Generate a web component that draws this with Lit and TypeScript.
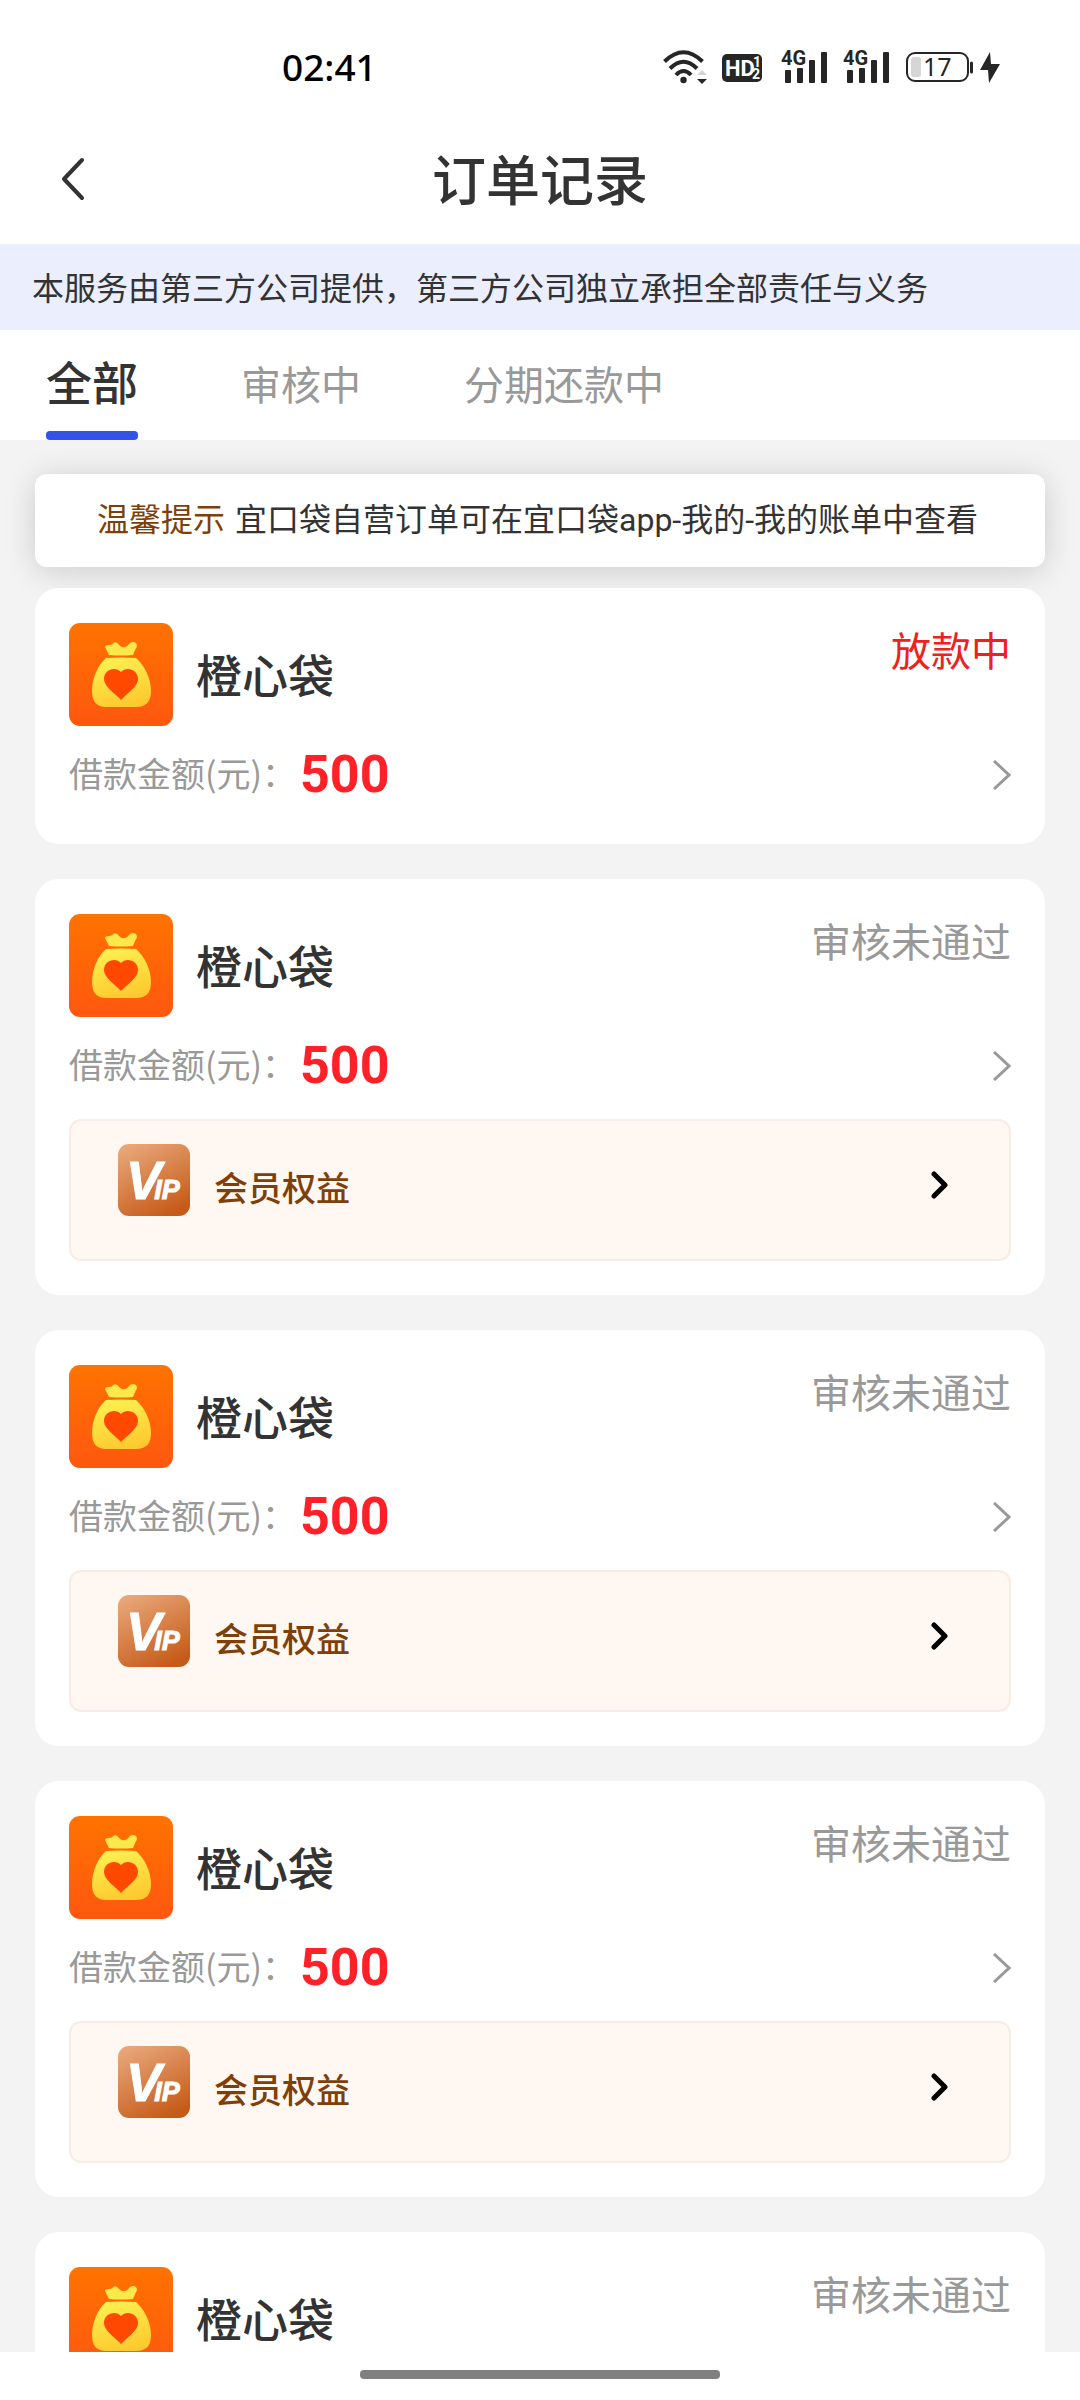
import { LitElement, html, css, nothing } from "lit";
import { customElement, property, state } from "lit/decorators.js";
import { classMap } from "lit/directives/class-map.js";

interface Order {
  name: string;
  amount: number;
  status: string;
  active: boolean;
  member: boolean;
}

const rejected: Order = { name: "橙心袋", amount: 500, status: "审核未通过", active: false, member: true };

const ORDERS: Order[] = [
  { name: "橙心袋", amount: 500, status: "放款中", active: true, member: false },
  rejected,
  rejected,
  rejected,
  rejected,
];

const TABS = ["全部", "审核中", "分期还款中"];

@customElement("status-bar")
class StatusBar extends LitElement {
  static styles = css`
    :host {
      display: flex;
      align-items: center;
      justify-content: space-between;
      height: 136px;
      padding: 0 80px 0 282px;
      box-sizing: border-box;
      flex: none;
    }
    .time {
      padding-bottom: 2px;
      font: 500 37px/48px "Noto Sans", "Open Sans", sans-serif;
      color: #000;
    }
    .icons {
      display: flex;
      align-items: center;
      gap: 16px;
    }
    svg {
      display: block;
      overflow: visible;
    }
    .hd {
      font: 700 22px "Liberation Sans Narrow", "Roboto", sans-serif;
      fill: #fff;
    }
    .hd-sub {
      font: 700 14px "Liberation Sans Narrow", "Roboto", sans-serif;
      fill: #fff;
    }
    .net {
      font: 700 20px "Liberation Sans Narrow", "Roboto", sans-serif;
      fill: #262626;
    }
    .level {
      font: 400 25px "Noto Sans", sans-serif;
      fill: #262626;
    }
  `;

  private signal() {
    return html`<svg width="46" height="36" viewBox="0 0 46 36" role="img" aria-label="4G">
      <g fill="#262626">
        <rect x="3" y="20" width="6" height="13" rx="1" />
        <rect x="15" y="18" width="6" height="15" rx="1" />
        <rect x="27" y="10" width="6" height="23" rx="1" />
        <rect x="39" y="2" width="6" height="31" rx="1" />
      </g>
      <text class="net" x="-1" y="15">4G</text>
    </svg>`;
  }

  render() {
    return html`
      <span class="time">02:41</span>
      <div class="icons">
        <svg width="44" height="36" viewBox="0 0 44 36" role="img" aria-label="Wi-Fi">
          <g fill="none" stroke="#262626" stroke-width="4">
            <path d="M2.500 11.500 Q21.500 -7 40.500 11.500" />
            <path d="M8 18.500 Q21.500 5 35 18.500" />
            <path d="M14 25 Q21.500 17 29 25" />
          </g>
          <circle cx="21.500" cy="30" r="3.200" fill="#262626" />
          <path d="M35 25 L40 20 L45 25 Z" fill="#d4d4d4" />
          <path d="M35 29 L45 29 L40 34 Z" fill="#262626" />
        </svg>
        <svg width="44" height="36" viewBox="0 0 44 36" role="img" aria-label="HD">
          <rect x="0" y="4" width="40" height="28" rx="5" fill="#262626" />
          <text class="hd" font-size="20" x="3" y="26">HD</text>
          <text class="hd-sub" x="31" y="17">1</text>
          <text class="hd-sub" x="30" y="29">2</text>
        </svg>
        ${this.signal()} ${this.signal()}
        <svg width="94" height="36" viewBox="0 0 94 36" role="img" aria-label="17%">
          <rect x="1" y="3" width="61" height="28" rx="8" fill="none" stroke="#262626" stroke-width="2" />
          <rect x="5" y="7" width="10" height="20" rx="3" fill="#d6d6d6" />
          <text class="level" x="17" y="26">17</text>
          <path d="M65.500 13 V22" stroke="#262626" stroke-width="3" stroke-linecap="round" />
          <path d="M84 2 L74 20 H82 L83 33 L94 14 H85 Z" fill="#262626" />
        </svg>
      </div>
    `;
  }
}

@customElement("order-card")
class OrderCard extends LitElement {
  @property({ attribute: false }) order!: Order;

  static styles = css`
    :host {
      display: block;
      box-sizing: border-box;
      padding: 35px 34px 20px;
      border-radius: 24px;
      background: #fff;
    }
    svg {
      display: block;
      flex: none;
    }
    .head {
      display: flex;
      align-items: center;
      gap: 23px;
    }
    .name {
      flex: 1;
      margin: 0;
      padding-bottom: 4px;
      font-size: 46px;
      font-weight: 500;
      line-height: 60px;
      color: #333;
    }
    .status {
      align-self: flex-start;
      font-size: 40px;
      line-height: 52px;
      color: #999;
    }
    .status.active {
      color: #f02020;
    }
    .amount {
      display: flex;
      align-items: center;
      gap: 4px;
      height: 98px;
      color: #999;
      text-decoration: none;
    }
    .label {
      padding-bottom: 4px;
      font-size: 34px;
      line-height: 48px;
    }
    .value {
      flex: 1;
      font: 700 52px/60px "Roboto", "Noto Sans CJK SC", sans-serif;
      color: #ff2028;
    }
    .member {
      display: flex;
      align-items: flex-start;
      gap: 24px;
      margin: 4px 0 14px;
      padding: 23px 60px 23px 47px;
      box-sizing: border-box;
      border: 2px solid #f8ece4;
      border-radius: 12px;
      background: #fff7f1;
      color: #7f3f08;
      text-decoration: none;
    }
    .member-text {
      flex: 1;
      padding-bottom: 6px;
      font-size: 34px;
      font-weight: 500;
      line-height: 86px;
    }
    .member-go {
      margin-top: 26px;
    }
    .vip-v {
      font: italic 700 53px "Liberation Sans", sans-serif;
      fill: #fff;
      stroke: #fff;
      stroke-width: 1px;
    }
    .vip-ip {
      font-size: 27px;
    }
  `;

  private logo() {
    return html`<svg width="104" height="103" viewBox="0 0 104 103" aria-hidden="true">
      <defs>
        <linearGradient id="tile" x1="0" y1="0" x2="0" y2="1">
          <stop offset="0" stop-color="#ff7300" />
          <stop offset="1" stop-color="#ff570f" />
        </linearGradient>
        <linearGradient id="bag" x1="0.300" y1="0" x2="0.600" y2="1">
          <stop offset="0" stop-color="#fdf050" />
          <stop offset="1" stop-color="#fdc92f" />
        </linearGradient>
      </defs>
      <rect width="104" height="103" rx="11" fill="url(#tile)" />
      <path
        d="M40 32 L36 24 Q36 22 40 22 Q43 22 45 19.500 Q48 18.500 50 22 Q53 25 56 24 Q59 23 61 20 Q64 18 67 20 Q69 23 66.500 26 L64 32 Q52 33 40 32 Z"
        fill="#fbe84a"
      />
      <path
        d="M37 35 Q52 34 67 35 C75 42 82 55 82 68 C82 79 77 84 67 84 H37 C28 84 23 79 23 68 C23 55 29 42 37 35 Z"
        fill="url(#bag)"
      />
      <path
        d="M52 77 C46 70 35 64 35 56 C35 46 47 43 52 49 C57 43 69 46 69 56 C69 64 58 70 52 77 Z"
        fill="#ff4800"
      />
    </svg>`;
  }

  private vip() {
    return html`<svg width="72" height="72" viewBox="0 0 72 72" role="img" aria-label="VIP">
      <defs>
        <linearGradient id="copper" x1="0.200" y1="0" x2="0.700" y2="1">
          <stop offset="0" stop-color="#e8a678" />
          <stop offset="1" stop-color="#c65a18" />
        </linearGradient>
      </defs>
      <rect width="72" height="72" rx="11" fill="url(#copper)" />
      <text class="vip-v" x="8" y="55">V<tspan class="vip-ip" dx="-7">IP</tspan></text>
    </svg>`;
  }

  render() {
    const o = this.order;
    return html`
      <div class="head">
        ${this.logo()}
        <h2 class="name">${o.name}</h2>
        <span class=${classMap({ status: true, active: o.active })}>${o.status}</span>
      </div>
      <a class="amount" href="#order">
        <span class="label">借款金额(元)：</span>
        <span class="value">${o.amount}</span>
        <svg width="18" height="30" viewBox="0 0 18 30" aria-hidden="true">
          <path d="M1 1 L16 15 L1 29" fill="none" stroke="#999" stroke-width="3" />
        </svg>
      </a>
      ${o.member
        ? html`<a class="member" href="#member">
            ${this.vip()}
            <span class="member-text">会员权益</span>
            <svg class="member-go" width="18" height="30" viewBox="0 0 18 30" aria-hidden="true">
              <path
                d="M3 4 L14 15 L3 26"
                fill="none"
                stroke="#000"
                stroke-width="5"
                stroke-linecap="round"
                stroke-linejoin="round"
              />
            </svg>
          </a>`
        : nothing}
    `;
  }
}

@customElement("app-root")
class AppRoot extends LitElement {
  @state() private tab = 0;

  static styles = css`
    :host {
      display: flex;
      flex-direction: column;
      height: 100vh;
      overflow: hidden;
      background: #fff;
      color: #333;
      font-family: "Noto Sans CJK SC", sans-serif;
    }
    .header {
      display: grid;
      grid-template-columns: 1fr auto 1fr;
      align-items: center;
      flex: none;
      height: 108px;
      padding: 0 50px 22px;
      box-sizing: border-box;
    }
    .back {
      justify-self: start;
      padding: 8px 10px;
      border: 0;
      background: none;
    }
    .back svg {
      display: block;
    }
    .title {
      margin: 0;
      padding-bottom: 2px;
      font-size: 54px;
      font-weight: 500;
      line-height: 72px;
    }
    .notice {
      flex: none;
      margin: 0;
      padding: 18px 32px 20px;
      font-size: 32px;
      line-height: 48px;
      background: #ebeefd;
    }
    .tabs {
      display: flex;
      flex: none;
      gap: 103px;
      height: 110px;
      padding: 0 46px;
    }
    .tab {
      display: flex;
      flex-direction: column;
      align-items: center;
      justify-content: space-between;
      padding: 0;
      border: 0;
      background: none;
      font: 400 40px/52px "Noto Sans CJK SC", sans-serif;
      color: #999;
    }
    .tab-label {
      height: 101px;
      line-height: 106px;
    }
    .tab.on {
      font-size: 46px;
      font-weight: 500;
      color: #333;
    }
    .on .tab-label {
      line-height: 100px;
    }
    .bar {
      width: 100%;
      height: 9px;
      border-radius: 4px;
    }
    .on .bar {
      background: #3451ea;
    }
    .list {
      flex: 1;
      min-height: 0;
      overflow-y: auto;
      scrollbar-width: none;
      padding: 34px 35px;
      background: #f3f3f3;
    }
    .tip {
      margin: 0 0 21px;
      padding: 22px 32px 23px 62px;
      border-radius: 12px;
      background: #fff;
      box-shadow: 0 4px 32px rgba(0, 0, 0, 0.16);
      font-family: "Roboto", "Noto Sans CJK SC", sans-serif;
      font-size: 32px;
      line-height: 48px;
    }
    .tip-key {
      margin-right: 10px;
      color: #7f3f08;
    }
    .cards {
      display: flex;
      flex-direction: column;
      gap: 35px;
      position: relative;
    }
    .home {
      display: flex;
      justify-content: center;
      align-items: center;
      flex: none;
      height: 48px;
      padding-bottom: 3px;
      box-sizing: border-box;
    }
    .pill {
      width: 33.333%;
      height: 9px;
      border-radius: 4px;
      background: #808080;
    }
  `;

  render() {
    return html`
      <status-bar></status-bar>
      <header class="header">
        <button class="back" type="button" aria-label="返回">
          <svg width="26" height="44" viewBox="0 0 26 44" aria-hidden="true">
            <path
              d="M22 3 L4 22 L22 41"
              fill="none"
              stroke="#333"
              stroke-width="4"
              stroke-linecap="round"
              stroke-linejoin="round"
            />
          </svg>
        </button>
        <h1 class="title">订单记录</h1>
      </header>
      <p class="notice">本服务由第三方公司提供，第三方公司独立承担全部责任与义务</p>
      <nav class="tabs" role="tablist">
        ${TABS.map(
          (t, i) => html`<button
            type="button"
            role="tab"
            aria-selected=${i === this.tab ? "true" : "false"}
            class=${classMap({ tab: true, on: i === this.tab })}
            @click=${() => (this.tab = i)}
          >
            <span class="tab-label">${t}</span><span class="bar"></span>
          </button>`
        )}
      </nav>
      <main class="list">
        <p class="tip"><span class="tip-key">温馨提示</span>宜口袋自营订单可在宜口袋app-我的-我的账单中查看</p>
        <div class="cards">${ORDERS.map((o) => html`<order-card .order=${o}></order-card>`)}</div>
      </main>
      <div class="home"><div class="pill"></div></div>
    `;
  }
}
